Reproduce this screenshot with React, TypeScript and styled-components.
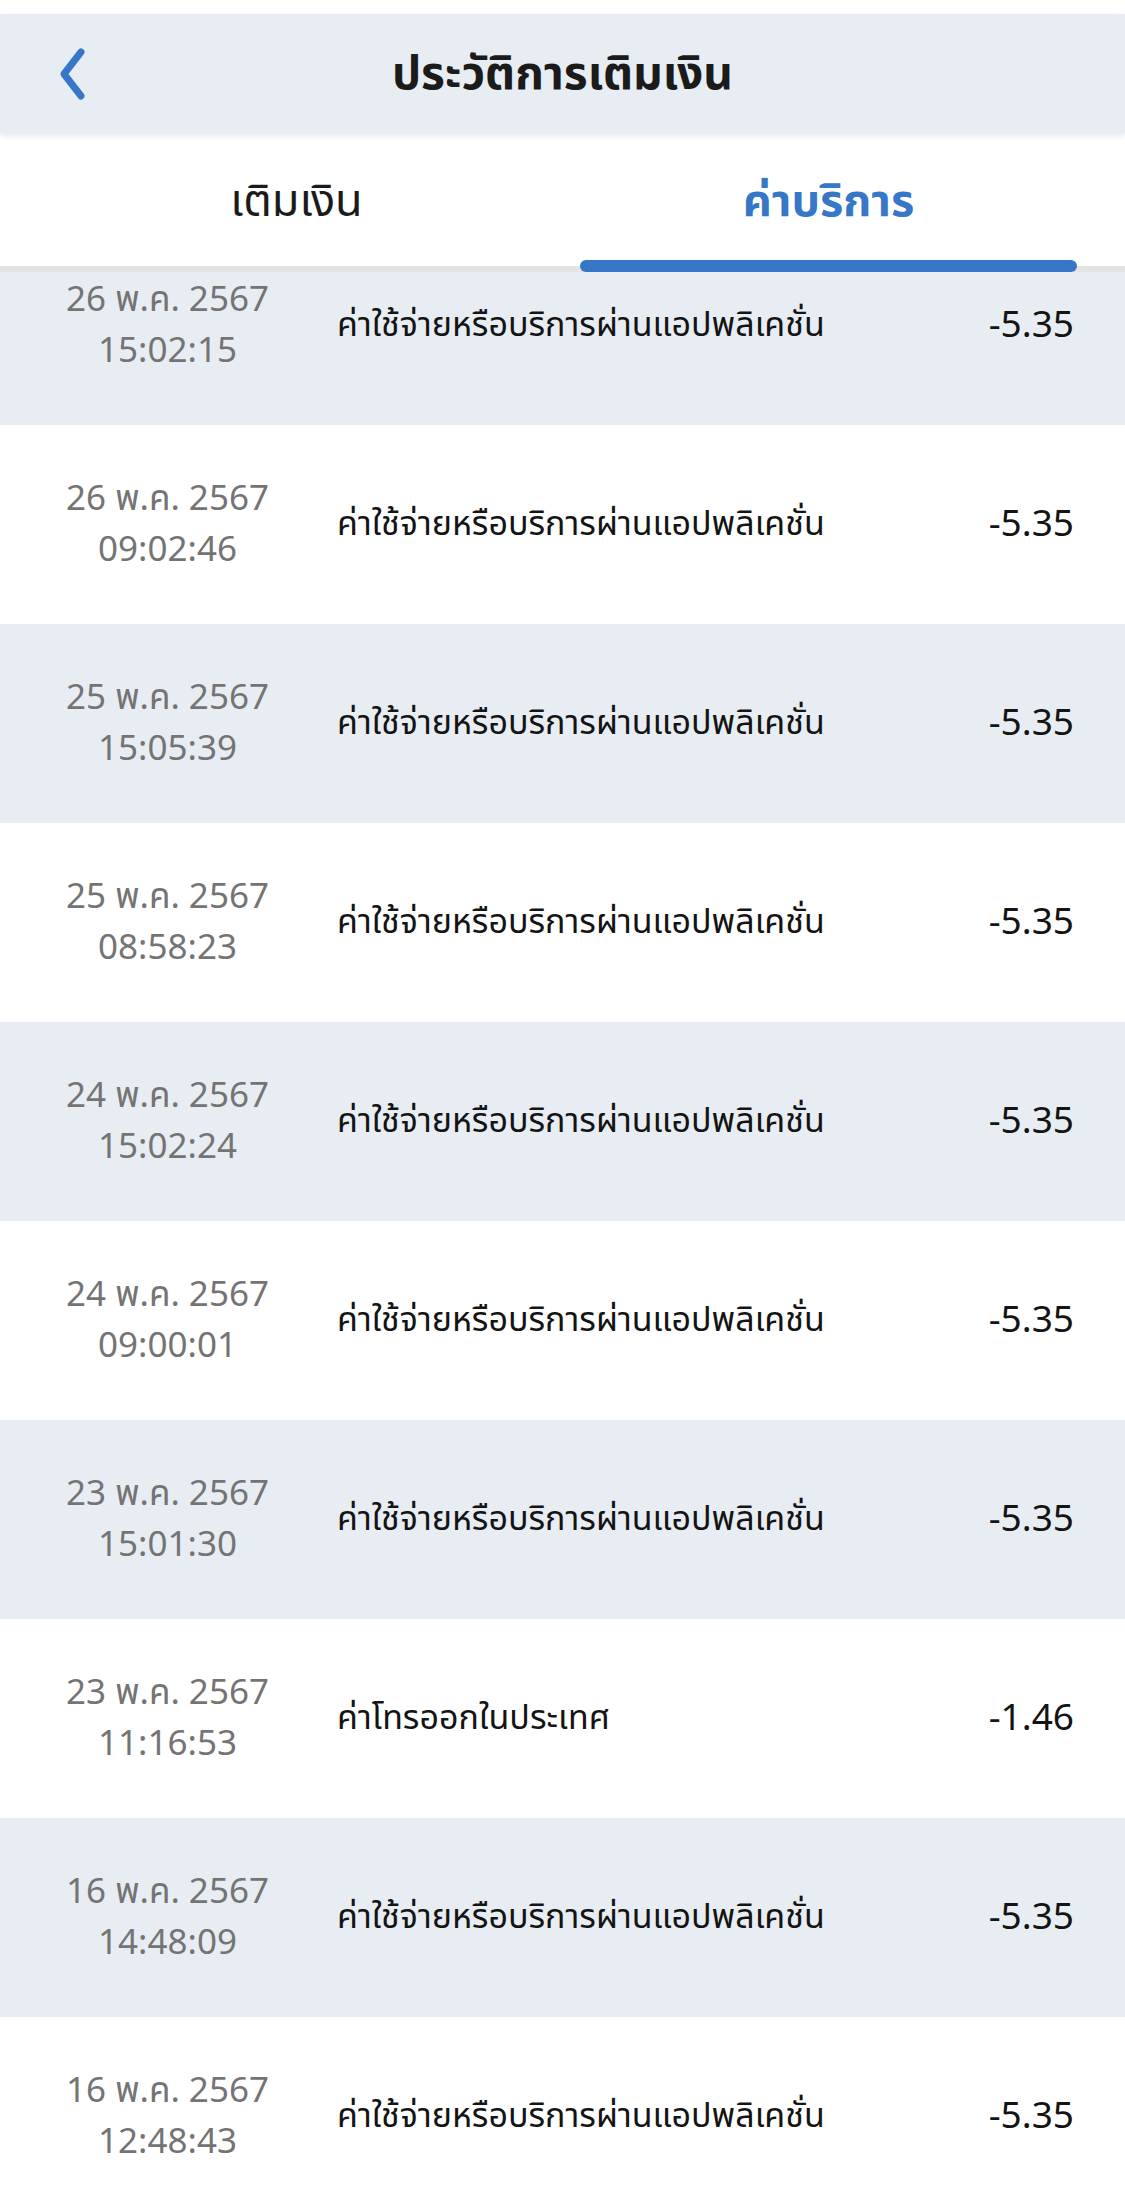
import React from "react";
import styled, { createGlobalStyle } from "styled-components";

const GlobalStyle = createGlobalStyle`
  html, body {
    margin: 0;
    padding: 0;
    background: #ffffff;
  }
  body {
    font-family: "Noto Sans Thai", "Noto Sans", "Liberation Sans", sans-serif;
    -webkit-font-smoothing: antialiased;
  }
  * { box-sizing: border-box; }
`;

const Page = styled.div`
  width: 1125px;
  height: 2199px;
  display: flex;
  flex-direction: column;
  overflow: hidden;
  background: #ffffff;
  padding-top: 14px;
`;

const Header = styled.header`
  position: relative;
  z-index: 2;
  height: 119px;
  flex: none;
  display: grid;
  grid-template-columns: 160px 1fr 160px;
  align-items: center;
  background: #e8edf3;
  box-shadow: 0 3px 6px rgba(0, 0, 0, 0.09);
`;

const BackButton = styled.button`
  justify-self: start;
  margin-left: 56px;
  width: 32px;
  height: 56px;
  padding: 0;
  border: none;
  background: transparent;
  display: flex;
  align-items: center;
  justify-content: center;
  cursor: pointer;
`;

const Title = styled.h1`
  margin: 0;
  text-align: center;
  font-size: 46px;
  font-weight: 700;
  color: #1b1b1b;
  line-height: 1;
  padding-top: 2px;
`;

const TabBar = styled.nav`
  position: relative;
  z-index: 1;
  flex: none;
  height: 139px;
  display: grid;
  grid-template-columns: 1fr 1fr;
  column-gap: 35px;
  padding: 0 48px;
  background: #ffffff;
  box-shadow: inset 0 -6px 0 #e4e4e4;
`;

const Tab = styled.button`
  display: flex;
  flex-direction: column;
  padding: 0;
  border: none;
  background: transparent;
  cursor: pointer;
  font-family: inherit;
`;

const TabLabel = styled.span<{ $active?: boolean }>`
  flex: 1;
  display: flex;
  align-items: center;
  justify-content: center;
  padding-top: 10px;
  font-size: 45px;
  font-weight: ${(p) => (p.$active ? 700 : 400)};
  color: ${(p) => (p.$active ? "#3677c8" : "#1b1b1b")};
`;

const Indicator = styled.span<{ $active?: boolean }>`
  height: 12px;
  border-radius: 6px;
  background: ${(p) => (p.$active ? "#3677c8" : "transparent")};
`;

const ListViewport = styled.div`
  flex: 1;
  overflow: hidden;
`;

const List = styled.ul`
  list-style: none;
  margin: -46px 0 0 0;
  padding: 0;
`;

const Row = styled.li<{ $shaded?: boolean }>`
  height: 199px;
  display: grid;
  grid-template-columns: 255px 1fr auto;
  column-gap: 42px;
  align-items: center;
  padding: 0 51px 0 40px;
  background: ${(p) => (p.$shaded ? "#e8edf3" : "#ffffff")};
`;

const DateCell = styled.div`
  display: flex;
  flex-direction: column;
  align-items: center;
  font-size: 35px;
  line-height: 51px;
  color: #747474;
`;

const Description = styled.div`
  font-size: 34px;
  color: #141414;
  white-space: nowrap;
`;

const Amount = styled.div`
  font-size: 37px;
  color: #141414;
  text-align: right;
`;

const ChevronLeft = () => (
  <svg width="32" height="56" viewBox="0 0 32 56" fill="none">
    <polyline
      points="25,6 8,28 25,50"
      stroke="#3677c8"
      strokeWidth="7"
      strokeLinecap="round"
      strokeLinejoin="round"
    />
  </svg>
);

type Item = { date: string; time: string; desc: string; amount: string };

const APP = "ค่าใช้จ่ายหรือบริการผ่านแอปพลิเคชั่น";

const items: Item[] = [
  { date: "26 พ.ค. 2567", time: "15:02:15", desc: APP, amount: "-5.35" },
  { date: "26 พ.ค. 2567", time: "09:02:46", desc: APP, amount: "-5.35" },
  { date: "25 พ.ค. 2567", time: "15:05:39", desc: APP, amount: "-5.35" },
  { date: "25 พ.ค. 2567", time: "08:58:23", desc: APP, amount: "-5.35" },
  { date: "24 พ.ค. 2567", time: "15:02:24", desc: APP, amount: "-5.35" },
  { date: "24 พ.ค. 2567", time: "09:00:01", desc: APP, amount: "-5.35" },
  { date: "23 พ.ค. 2567", time: "15:01:30", desc: APP, amount: "-5.35" },
  { date: "23 พ.ค. 2567", time: "11:16:53", desc: "ค่าโทรออกในประเทศ", amount: "-1.46" },
  { date: "16 พ.ค. 2567", time: "14:48:09", desc: APP, amount: "-5.35" },
  { date: "16 พ.ค. 2567", time: "12:48:43", desc: APP, amount: "-5.35" },
];

export default function App() {
  return (
    <>
      <GlobalStyle />
      <Page>
        <Header>
          <BackButton aria-label="back">
            <ChevronLeft />
          </BackButton>
          <Title>ประวัติการเติมเงิน</Title>
          <span />
        </Header>
        <TabBar>
          <Tab>
            <TabLabel>เติมเงิน</TabLabel>
            <Indicator />
          </Tab>
          <Tab>
            <TabLabel $active>ค่าบริการ</TabLabel>
            <Indicator $active />
          </Tab>
        </TabBar>
        <ListViewport>
          <List>
            {items.map((it, i) => (
              <Row key={i} $shaded={i % 2 === 0}>
                <DateCell>
                  <span>{it.date}</span>
                  <span>{it.time}</span>
                </DateCell>
                <Description>{it.desc}</Description>
                <Amount>{it.amount}</Amount>
              </Row>
            ))}
          </List>
        </ListViewport>
      </Page>
    </>
  );
}
